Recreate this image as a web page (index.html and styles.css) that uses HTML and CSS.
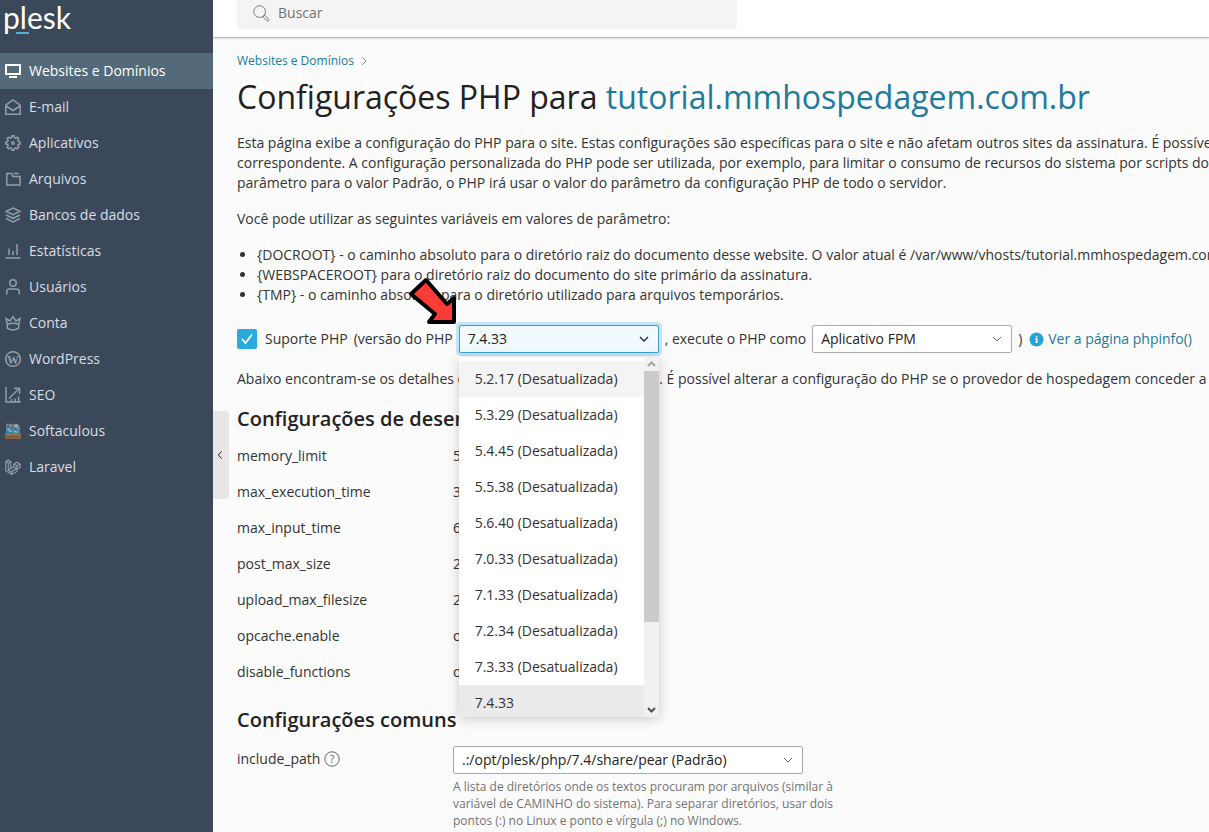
FILE: index.html
```html
<!DOCTYPE html>
<html lang="pt-BR">
<head>
    <meta charset="UTF-8">
    <meta name="viewport" content="width=device-width, initial-scale=1.0">
    <title>Configurações PHP</title>
    <link rel="stylesheet" href="styles.css">
</head>
<body>

<aside class="sidebar">
    <a class="logo" href="#">plesk</a>
    <nav class="nav">
        <a class="active" href="#">
            <svg viewBox="0 0 16 16"><path d="M1 2h14v9H1z" stroke-width="2"/><path d="M4 14h8" stroke-width="2"/></svg>
            Websites e Domínios
        </a>
        <a href="#">
            <svg viewBox="0 0 16 16"><path d="M.8 6.2 8 1l7.200 5.200V15.200H.8zM1 7l7 4.500L15 7"/></svg>
            E-mail
        </a>
        <a href="#">
            <svg viewBox="0 0 16 16"><path d="M6.600 2.600 7 .8h2l.4 1.800 1.300.6 1.600-1 1.500 1.500-1 1.600.6 1.300 1.800.4v2l-1.800.4-.6 1.300 1 1.600-1.500 1.500-1.600-1-1.300.6-.4 1.800H7l-.4-1.800-1.300-.6-1.600 1-1.500-1.500 1-1.600-.6-1.300L.8 9V7l1.800-.4.6-1.300-1-1.600 1.500-1.500 1.600 1z"/><circle cx="8" cy="8" r="1.300"/></svg>
            Aplicativos
        </a>
        <a href="#">
            <svg viewBox="0 0 16 16"><path d="M1.800 2.500h4.700l1.500 3h7v8.500H1.800zM8.500 2.500H14"/></svg>
            Arquivos
        </a>
        <a href="#">
            <svg viewBox="0 0 16 16"><path d="M8 1l7 3.300-7 3.300-7-3.300zM1 8l7 3.300L15 8M1 11.500l7 3.500 7-3.500"/></svg>
            Bancos de dados
        </a>
        <a href="#">
            <svg viewBox="0 0 16 16"><path d="M.5 15h15M4 12V5.500M8 12V8M12 12V1"/></svg>
            Estatísticas
        </a>
        <a href="#">
            <svg viewBox="0 0 16 16"><circle cx="8" cy="4" r="3.200"/><path d="M1.700 15.500v-2.500q0-3 3-3h6.600q3 0 3 3v2.500"/></svg>
            Usuários
        </a>
        <a href="#">
            <svg viewBox="0 0 16 16"><path d="M2.300 9.500 1 3.500l4 2.500 3-4.500L11 6l4-2.500-1.300 6M2.300 9.500q5.700-2.500 11.400 0M2.300 9.500v3.700q5.700 3.600 11.400 0V9.500"/></svg>
            Conta
        </a>
        <a href="#">
            <svg viewBox="0 0 16 16"><circle cx="8" cy="8" r="7.300"/><text class="wp" x="8" y="13" text-anchor="middle">W</text></svg>
            WordPress
        </a>
        <a href="#">
            <svg viewBox="0 0 16 16"><path d="M1 0v15h15M4 11.500 14.500 1.200M9 1.200h5.500v6M6.500 15v-3M10 15v-3.500M13.500 15V9.500"/></svg>
            SEO
        </a>
        <a href="#">
            <svg class="color" viewBox="0 0 16 16">
                <path fill="#71858f" d="M1 0l2 1.500 3-1L8 2l1-1 3-.5L14 2l1 3v3H1z"/>
                <path fill="#a86f5f" d="M7 2h2v1.500H7zM12 4h2v2h-2z"/>
                <path fill="#3a4859" d="M2 3h2v1H2zM6 4h2v1H6zM10 5h1v2h-1z"/>
                <path fill="#3489a8" d="M1 5h3l2 2 3-2 3 2 3-.5V10H1z"/>
                <path fill="#9fb9c0" d="M3 5l2 3 1-1 1 2H5L2 6.500zM9 2l3-.5 1 2-2 1zM9 7l2 1.500h2V9.500H9z"/>
                <path fill="#86664a" d="M0 10h16v6H0z"/>
                <path fill="#a07a58" d="M1 11h14v1H1z"/>
                <path fill="#6d5743" d="M1 13.500h14v1H1z"/>
            </svg>
            Softaculous
        </a>
        <a href="#">
            <svg viewBox="0 0 16 16"><path stroke-width="1.100" d="M.8 2.500 3.300 1l2.500 1.500v7l3-1.700V5l3.200-1.800L15.200 5v3.200L12 10v2.500L6.800 15.400.8 12zM.8 2.500 3.300 4l2.500-1.500M3.300 4v7.500l3.500 2M6.800 15.400v-3L12 9.500M8.800 5 12 6.800 15.200 5M12 6.800V10M8.800 7.800 12 9.800M3.300 11l2.500-1.500"/></svg>
            Laravel
        </a>
    </nav>
</aside>

<div class="page">
    <header class="topbar">
        <div class="search">
            <svg viewBox="0 0 18 18"><circle cx="7" cy="7" r="6.200"/><path d="M10.500 12.500l1.800-1.800 4.200 4.400q.6 1-.2 1.600t-1.600-.2z"/></svg>
            <input type="text" placeholder="Buscar" aria-label="Buscar">
        </div>
    </header>

    <button class="collapse" type="button" aria-label="Recolher menu">
        <svg viewBox="0 0 6 10"><path d="M4.500 1.500 1.300 5l3.200 3.500"/></svg>
    </button>

    <main class="content">
        <div class="breadcrumb">
            <a href="#">Websites e Domínios</a>
            <svg viewBox="0 0 6 10"><path d="M1 1l4 4-4 4"/></svg>
        </div>
        <h1>Configurações PHP para <a href="#">tutorial.mmhospedagem.com.br</a></h1>

        <p>Esta página exibe a configuração do PHP para o site. Estas configurações são específicas para o site e não afetam outros sites da assinatura. É possível<br>
        correspondente. A configuração personalizada do PHP pode ser utilizada, por exemplo, para limitar o consumo de recursos do sistema por scripts do<br>
        parâmetro para o valor Padrão, o PHP irá usar o valor do parâmetro da configuração PHP de todo o servidor.</p>
        <p>Você pode utilizar as seguintes variáveis em valores de parâmetro:</p>
        <ul class="vars">
            <li>{DOCROOT} - o caminho absoluto para o diretório raiz do documento desse website. O valor atual é /var/www/vhosts/tutorial.mmhospedagem.com.br</li>
            <li>{WEBSPACEROOT} para o diretório raiz do documento do site primário da assinatura.</li>
            <li>{TMP} - o caminho absoluto para o diretório utilizado para arquivos temporários.</li>
        </ul>

        <div class="support">
            <input type="checkbox" id="php-support" checked>
            <label for="php-support">Suporte PHP</label>
            <label for="php-version">(versão do PHP</label>
            <div class="version">
                <select id="php-version" class="focused">
                    <option>7.4.33</option>
                </select>
                <div class="menu">
                    <ul class="options">
                        <li class="hover">5.2.17 (Desatualizada)</li>
                        <li>5.3.29 (Desatualizada)</li>
                        <li>5.4.45 (Desatualizada)</li>
                        <li>5.5.38 (Desatualizada)</li>
                        <li>5.6.40 (Desatualizada)</li>
                        <li>7.0.33 (Desatualizada)</li>
                        <li>7.1.33 (Desatualizada)</li>
                        <li>7.2.34 (Desatualizada)</li>
                        <li>7.3.33 (Desatualizada)</li>
                        <li class="selected">7.4.33</li>
                    </ul>
                    <div class="scrollbar">
                        <svg viewBox="0 0 15 14"><path d="M4 9l3.500-3.500L11 9" stroke="#a3a3a3"/></svg>
                        <div class="thumb"></div>
                        <svg viewBox="0 0 15 14"><path d="M4 5l3.500 3.500L11 5" stroke="#505050"/></svg>
                    </div>
                </div>
                <svg class="arrow" viewBox="0 0 54 52"><path d="M21 5 6 19l24 20-6 8h25V23l-7 6z"/></svg>
            </div>
            <label for="php-handler">, execute o PHP como</label>
            <select id="php-handler">
                <option>Aplicativo FPM</option>
            </select>
            <span>)</span>
            <a class="info" href="#">
                <svg viewBox="0 0 16 16"><circle cx="8" cy="8" r="7.500"/><text x="8" y="12" text-anchor="middle">i</text></svg>
                Ver a página phpinfo()
            </a>
        </div>

        <p>Abaixo encontram-se os detalhes da configuração PHP deste site. É possível alterar a configuração do PHP se o provedor de hospedagem conceder a</p>

        <h2>Configurações de desempenho</h2>
        <dl class="settings">
            <dt>memory_limit</dt><dd>512M</dd>
            <dt>max_execution_time</dt><dd>30</dd>
            <dt>max_input_time</dt><dd>60</dd>
            <dt>post_max_size</dt><dd>256M</dd>
            <dt>upload_max_filesize</dt><dd>256M</dd>
            <dt>opcache.enable</dt><dd>on</dd>
            <dt>disable_functions</dt><dd>opcache_get_status</dd>
        </dl>

        <h2>Configurações comuns</h2>
        <div class="field">
            <label for="include-path">include_path
                <svg viewBox="0 0 16 16"><circle cx="8" cy="8" r="7.200"/><text x="8" y="12" text-anchor="middle">?</text></svg>
            </label>
            <div class="control">
                <select id="include-path">
                    <option>.:/opt/plesk/php/7.4/share/pear (Padrão)</option>
                </select>
                <p class="hint">A lista de diretórios onde os textos procuram por arquivos (similar à variável de CAMINHO do sistema). Para separar diretórios, usar dois pontos (:) no Linux e ponto e vírgula (;) no Windows.</p>
            </div>
        </div>
    </main>
</div>

</body>
</html>
```

FILE: styles.css
```css
* {
    box-sizing: border-box;
}
body {
    margin: 0;
    display: flex;
    height: 100vh;
    overflow: hidden;
    font-family: "Open Sans", sans-serif;
    font-size: 14px;
    line-height: 20px;
    color: #333;
    background: #fbfbfb;
}
a {
    color: #217a9c;
    text-decoration: none;
}
svg {
    fill: none;
    stroke: currentColor;
    flex: none;
}

/* Sidebar */
.sidebar {
    width: 213px;
    flex: none;
    background: #3a4859;
}
.logo {
    display: block;
    height: 53px;
    padding-left: 3px;
    font-family: Lato, sans-serif;
    font-size: 30px;
    font-weight: 400;
    line-height: 34px;
    color: #fff;
}
.logo::after {
    content: "";
    display: block;
    width: 13px;
    height: 2px;
    margin: -2px 0 0 13px;
    background: #53b0d6;
}
.nav a {
    display: flex;
    align-items: center;
    gap: 8px;
    height: 36px;
    padding-left: 5px;
    color: #d8dee5;
}
.nav svg {
    width: 16px;
    height: 16px;
    color: #929daa;
    stroke-width: 1.5;
}
.nav .active,
.nav .active svg {
    color: #fff;
}
.nav .active {
    background: #546a7b;
}
.nav svg.color {
    stroke: none;
}
.wp {
    font: bold 12px "Liberation Serif", serif;
    fill: currentColor;
    stroke: none;
}

/* Top bar */
.page {
    position: relative;
    flex: 1;
    min-width: 0;
    overflow: hidden;
}
.topbar {
    padding: 0 24px 8px;
    background: #fff;
    border-bottom: 1px solid #bbb;
    box-shadow: 0 1px 2px rgba(0, 0, 0, 0.12);
}
.search {
    display: flex;
    align-items: center;
    gap: 8px;
    max-width: 500px;
    height: 29px;
    padding: 0 16px 3px;
    background: #f4f4f4;
    border-radius: 0 0 4px 4px;
}
.search svg {
    width: 17px;
    height: 17px;
    color: #737373;
}
.search input {
    flex: 1;
    padding: 0;
    border: 0;
    background: none;
    font: inherit;
    outline: none;
}
.search input::placeholder {
    color: #737373;
}
.collapse {
    position: absolute;
    left: 0;
    top: 411px;
    width: 16px;
    height: 88px;
    padding: 0 0 0 4px;
    border: 0;
    border-radius: 0 4px 4px 0;
    background: #e7e5e6;
    color: #222;
}
.collapse svg {
    display: block;
    width: 6px;
    height: 10px;
}

/* Content */
.content {
    padding: 13px 24px 0;
    white-space: nowrap;
}
.breadcrumb {
    display: flex;
    align-items: center;
    gap: 7px;
    font-size: 12px;
}
.breadcrumb svg {
    width: 6px;
    height: 10px;
    color: #888;
}
h1 {
    margin: 4px 0 14px;
    font-size: 32px;
    font-weight: 400;
    line-height: 44px;
    color: #222;
}
h2 {
    margin: 0;
    font-size: 20px;
    font-weight: 600;
    line-height: 28px;
    color: #222;
}
p {
    margin: 0 0 16px;
}
.vars {
    margin: 0 0 20px;
    padding-left: 20px;
}
.support {
    display: flex;
    align-items: center;
    gap: 6px;
    margin-bottom: 16px;
}
.support > * {
    flex: none;
}
input[type="checkbox"] {
    appearance: none;
    width: 20px;
    height: 20px;
    margin: 0 2px 0 0;
    border-radius: 2px;
    background: #28aade url("data:image/svg+xml,%3Csvg xmlns='http://www.w3.org/2000/svg' viewBox='0 0 20 20'%3E%3Cpath d='M5 10l3.500 4L15 5.500' fill='none' stroke='white' stroke-width='1.800'/%3E%3C/svg%3E");
}
select {
    appearance: none;
    width: 200px;
    height: 28px;
    padding: 0 28px 0 8px;
    border: 1px solid #aaa;
    border-radius: 2px;
    background: #fff url("data:image/svg+xml,%3Csvg xmlns='http://www.w3.org/2000/svg' viewBox='0 0 10 6'%3E%3Cpath d='M1 1l4 4 4-4' fill='none' stroke='%23666'/%3E%3C/svg%3E") no-repeat right 9px center / 10px 6px;
    font: inherit;
    color: #222;
}
.focused {
    display: block;
    border-color: #3f9fc8;
    background-color: #f0faff;
    background-image: url("data:image/svg+xml,%3Csvg xmlns='http://www.w3.org/2000/svg' viewBox='0 0 10 6'%3E%3Cpath d='M1 1l4 4 4-4' fill='none' stroke='%23222' stroke-width='1.300'/%3E%3C/svg%3E");
    box-shadow: 0 0 0 3px #bfe5f7;
}
.version {
    position: relative;
}
.menu {
    position: absolute;
    z-index: 1;
    top: 32px;
    left: 0;
    display: flex;
    width: 200px;
    height: 360px;
    background: #fff;
    box-shadow: 0 2px 12px rgba(0, 0, 0, 0.2);
}
.options {
    flex: 1;
    margin: 0;
    padding: 4px 0 0;
    overflow: hidden;
    list-style: none;
}
.options li {
    padding: 8px 16px;
}
.options .hover {
    background: #f4f4f4;
}
.options .selected {
    background: #eaeaea;
}
.scrollbar {
    display: flex;
    flex-direction: column;
    width: 15px;
    background: #f1f1f1;
}
.scrollbar svg {
    width: 15px;
    height: 14px;
    stroke-width: 2;
}
.thumb {
    height: 251px;
    margin-bottom: auto;
    background: #cbcbcb;
}
.arrow {
    position: absolute;
    z-index: 2;
    top: -50px;
    left: -54px;
    width: 54px;
    height: 52px;
    fill: #fb3b35;
    stroke: #000;
    stroke-width: 4;
    stroke-linejoin: round;
    pointer-events: none;
}
.info {
    display: flex;
    align-items: center;
    gap: 4px;
    margin-left: 1px;
}
.info svg {
    width: 15px;
    height: 15px;
    fill: #28a4d4;
    stroke: none;
}
.info text {
    font: bold 11px "Liberation Serif", serif;
    fill: #fff;
}
.settings {
    display: grid;
    grid-template-columns: 216px 1fr;
    margin: 5px 0 16px;
    line-height: 36px;
}
.settings dd {
    margin: 0;
}
.field {
    display: grid;
    grid-template-columns: 216px 1fr;
    margin-top: 12px;
}
.field label {
    display: flex;
    align-items: center;
    gap: 4px;
    height: 26px;
}
.field label svg {
    width: 16px;
    height: 16px;
    color: #666;
}
.field text {
    font-size: 11px;
    fill: #666;
    stroke: none;
}
.control {
    max-width: 384px;
    white-space: normal;
}
.control select {
    display: block;
    width: 350px;
}
.hint {
    margin-top: 4px;
    font-size: 12px;
    line-height: 17px;
    color: #737373;
}
```
